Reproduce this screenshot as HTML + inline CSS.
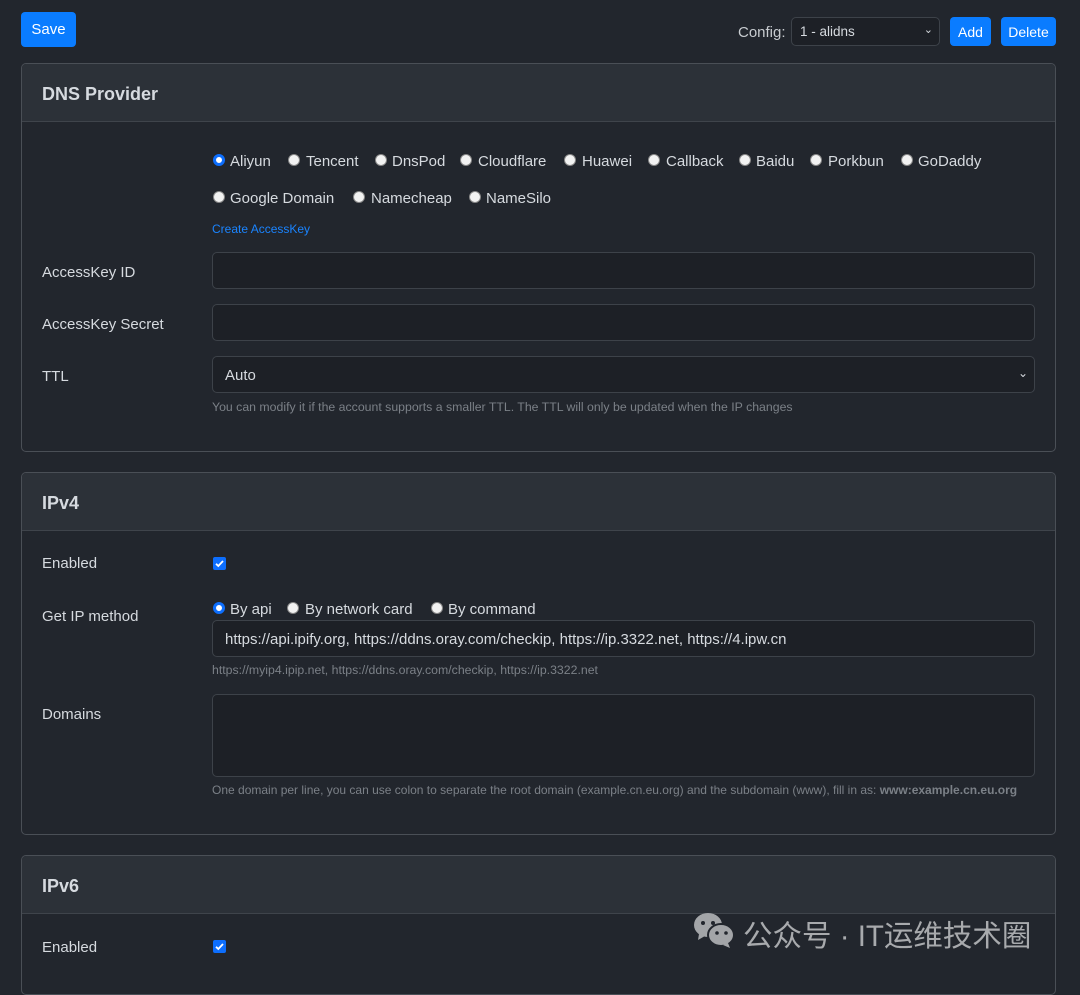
<!DOCTYPE html>
<html><head><meta charset="utf-8"><style>
*{box-sizing:border-box;margin:0;padding:0}
body{width:1080px;height:975px;background:#22262d;font-family:"Liberation Sans","Noto Sans CJK SC",sans-serif;color:#d6dadf;font-size:15px;position:relative;overflow:hidden}
.a{position:absolute;white-space:nowrap}
.btn{position:absolute;background:#0a7cff;color:#fff;border-radius:4px;display:flex;align-items:center;justify-content:center;line-height:1}
.card{position:absolute;left:21px;width:1035px;border:1px solid #4a4f56;border-radius:5px;overflow:hidden}
.hd{height:58px;background:#2c3138;border-bottom:1px solid #3f444b;padding-left:20px;font-size:18px;font-weight:bold;line-height:60px;color:#d6dadf}
.inp{position:absolute;left:212px;width:823px;background:#1d2026;border:1px solid #3d4249;border-radius:5px;padding-left:12px;display:flex;align-items:center;white-space:nowrap}
.r{position:absolute;width:12px;height:12px;border-radius:50%;background:#f2f2f2;border:1px solid #888}
.r.on{background:#fff;border:3px solid #0d6efd}
.lbl{position:absolute;color:#d6dadf;white-space:nowrap}
.hint{position:absolute;left:212px;font-size:12.3px;color:#7b8087;white-space:nowrap}
.cb{position:absolute;width:13px;height:13px;background:#0d6efd;border-radius:2px}
</style></head><body>
<div class="btn" style="left:21px;top:12px;width:55px;height:35px;font-size:15px">Save</div>
<div class="a" style="left:738px;top:24px;color:#c8ccd0">Config:</div>
<div class="inp" style="left:791px;top:17px;width:149px;height:29px;padding-left:8px;font-size:13.5px">1 - alidns<span style="position:absolute;right:6px;top:5px;font-size:11px">&#8964;</span></div>
<div class="btn" style="left:950px;top:17px;width:41px;height:29px;font-size:14px">Add</div>
<div class="btn" style="left:1001px;top:17px;width:55px;height:29px;font-size:14px">Delete</div>

<div class="card" style="top:63px;height:389px"><div class="hd">DNS Provider</div></div>
<div class="card" style="top:472px;height:363px"><div class="hd">IPv4</div></div>
<div class="card" style="top:855px;height:140px"><div class="hd">IPv6</div></div>

<div class="r on" style="left:213px;top:154px"></div><div class="lbl" style="left:230px;top:153px">Aliyun</div>
<div class="r" style="left:288px;top:154px"></div><div class="lbl" style="left:306px;top:153px">Tencent</div>
<div class="r" style="left:375px;top:154px"></div><div class="lbl" style="left:392px;top:153px">DnsPod</div>
<div class="r" style="left:460px;top:154px"></div><div class="lbl" style="left:478px;top:153px">Cloudflare</div>
<div class="r" style="left:564px;top:154px"></div><div class="lbl" style="left:582px;top:153px">Huawei</div>
<div class="r" style="left:648px;top:154px"></div><div class="lbl" style="left:666px;top:153px">Callback</div>
<div class="r" style="left:739px;top:154px"></div><div class="lbl" style="left:756px;top:153px">Baidu</div>
<div class="r" style="left:810px;top:154px"></div><div class="lbl" style="left:828px;top:153px">Porkbun</div>
<div class="r" style="left:901px;top:154px"></div><div class="lbl" style="left:918px;top:153px">GoDaddy</div>
<div class="r" style="left:213px;top:191px"></div><div class="lbl" style="left:230px;top:190px">Google Domain</div>
<div class="r" style="left:353px;top:191px"></div><div class="lbl" style="left:371px;top:190px">Namecheap</div>
<div class="r" style="left:469px;top:191px"></div><div class="lbl" style="left:486px;top:190px">NameSilo</div>
<div class="a" style="left:212px;top:222px;font-size:12px;color:#1a84ff">Create AccessKey</div>

<div class="lbl" style="left:42px;top:264px">AccessKey ID</div>
<div class="inp" style="top:252px;height:37px"></div>
<div class="lbl" style="left:42px;top:316px">AccessKey Secret</div>
<div class="inp" style="top:304px;height:37px"></div>
<div class="lbl" style="left:42px;top:368px">TTL</div>
<div class="inp" style="top:356px;height:37px;padding-top:2px">Auto<span style="position:absolute;right:6px;top:9px;font-size:12px">&#8964;</span></div>
<div class="hint" style="top:400px">You can modify it if the account supports a smaller TTL. The TTL will only be updated when the IP changes</div>

<div class="lbl" style="left:42px;top:555px">Enabled</div>
<div class="cb" style="left:213px;top:557px"><svg width="13" height="13" viewBox="0 0 13 13"><path d="M3 6.8l2.3 2.2 4.7-5" stroke="#fff" stroke-width="1.8" fill="none"/></svg></div>
<div class="lbl" style="left:42px;top:608px">Get IP method</div>
<div class="r on" style="left:213px;top:602px"></div><div class="lbl" style="left:230px;top:601px">By api</div>
<div class="r" style="left:287px;top:602px"></div><div class="lbl" style="left:305px;top:601px">By network card</div>
<div class="r" style="left:431px;top:602px"></div><div class="lbl" style="left:448px;top:601px">By command</div>
<div class="inp" style="top:620px;height:37px;padding-top:2px">https://api.ipify.org, https://ddns.oray.com/checkip, https://ip.3322.net, https://4.ipw.cn</div>
<div class="hint" style="top:663px">https://myip4.ipip.net, https://ddns.oray.com/checkip, https://ip.3322.net</div>
<div class="lbl" style="left:42px;top:706px">Domains</div>
<div class="inp" style="top:694px;height:83px"></div>
<div class="hint" style="top:783px;font-size:12px">One domain per line, you can use colon to separate the root domain (example.cn.eu.org) and the subdomain (www), fill in as: <b>www:example.cn.eu.org</b></div>

<div class="lbl" style="left:42px;top:939px">Enabled</div>
<div class="cb" style="left:213px;top:940px"><svg width="13" height="13" viewBox="0 0 13 13"><path d="M3 6.8l2.3 2.2 4.7-5" stroke="#fff" stroke-width="1.8" fill="none"/></svg></div>

<svg class="a" style="left:693px;top:912px" width="42" height="36" viewBox="0 0 42 36">
<ellipse cx="15" cy="13" rx="14" ry="12" fill="#a3a5a8"/><path d="M6 22l-1 6 7-4z" fill="#a3a5a8"/>
<ellipse cx="28" cy="23" rx="13" ry="11" fill="#a3a5a8" stroke="#22262d" stroke-width="2"/><path d="M35 31l2 5-7-3z" fill="#a3a5a8"/>
<circle cx="10" cy="11" r="2" fill="#22262d"/><circle cx="20" cy="11" r="2" fill="#22262d"/>
<circle cx="24" cy="21" r="1.8" fill="#22262d"/><circle cx="33" cy="21" r="1.8" fill="#22262d"/></svg>
<div class="a" style="left:743px;top:913px;font-size:29.5px;color:#a8aaad">公众号 · IT运维技术圈</div>
</body></html>
